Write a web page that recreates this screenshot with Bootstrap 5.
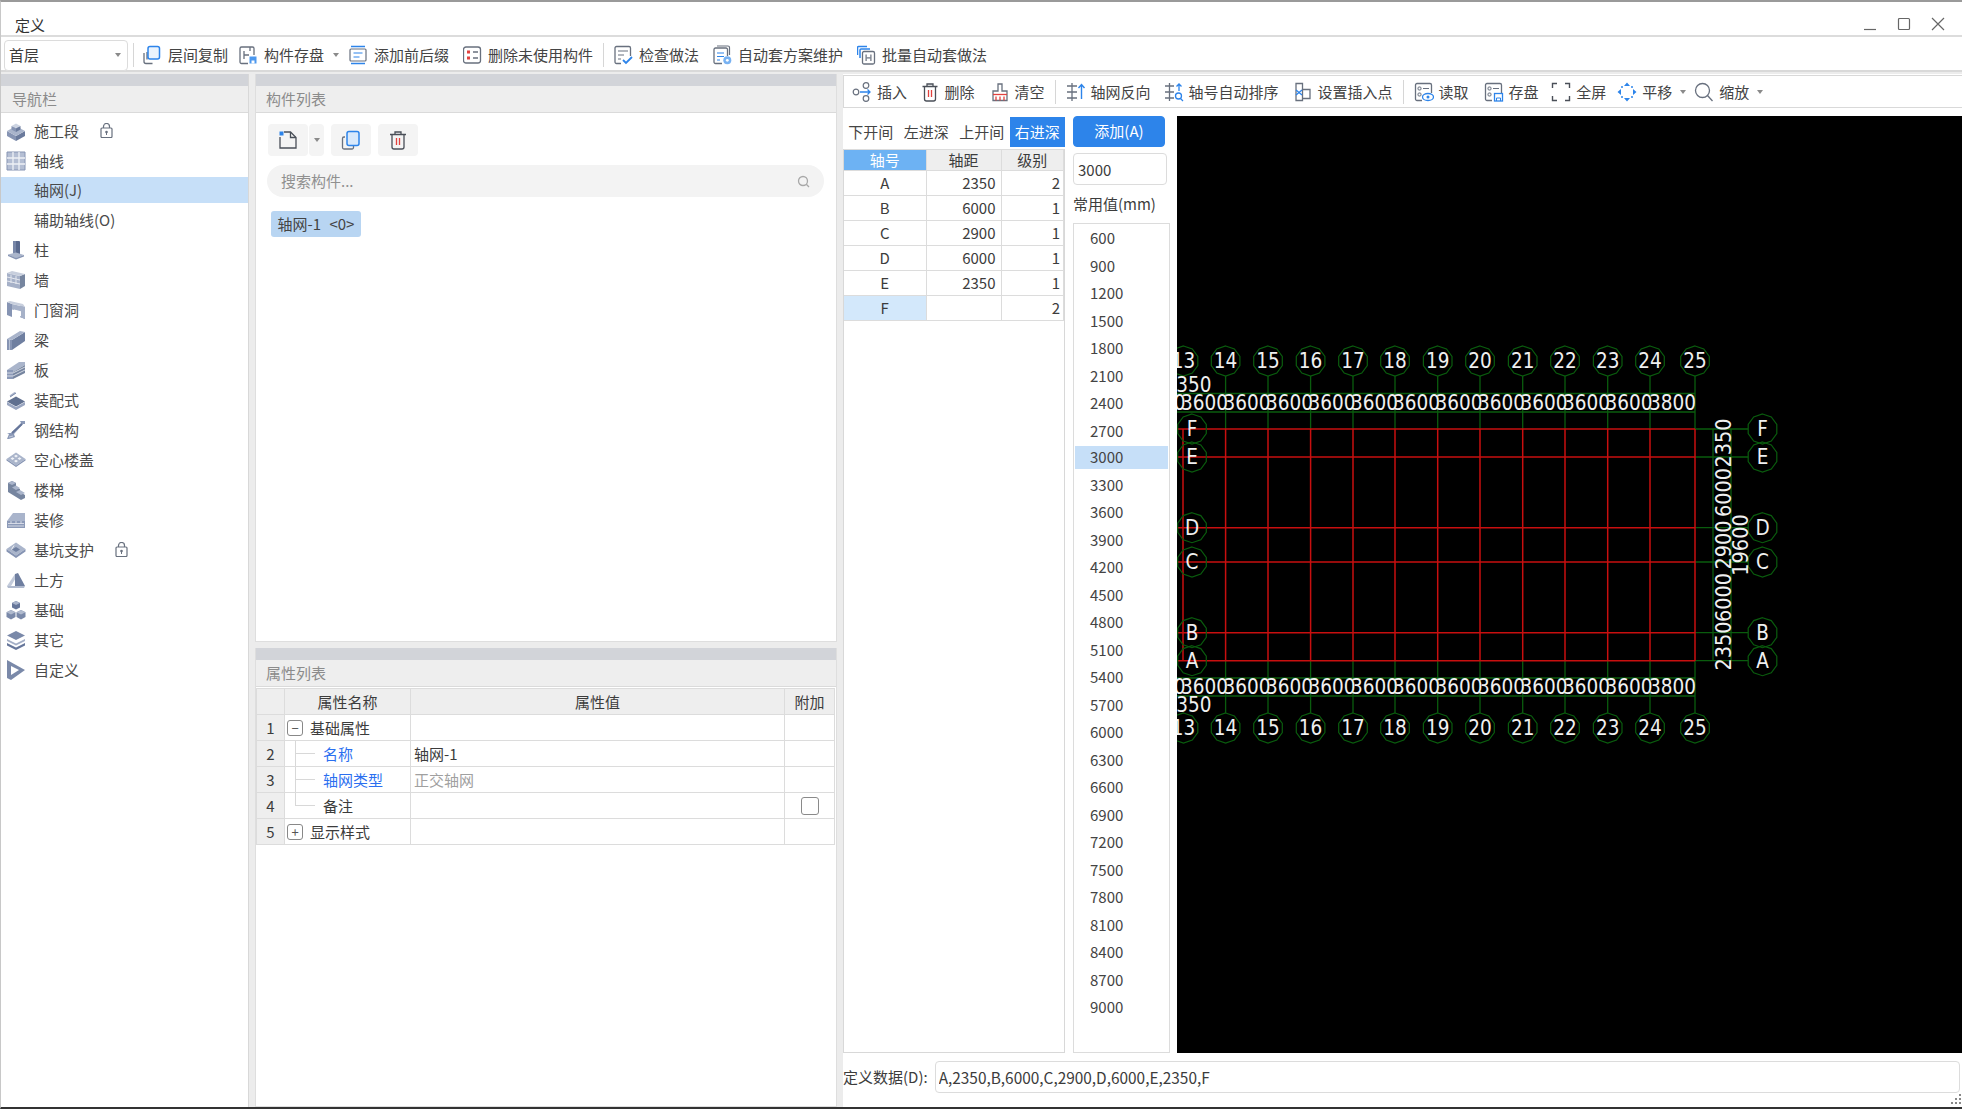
<!DOCTYPE html>
<html lang="zh-CN">
<head>
<meta charset="utf-8">
<title>定义</title>
<link href="https://cdn.jsdelivr.net/npm/bootstrap@5.3.0/dist/css/bootstrap.min.css" rel="stylesheet">
<style>
html,body{height:100%;margin:0;overflow:hidden;background:#fff}
body{font-family:"Noto Sans CJK SC","Liberation Sans",sans-serif;font-size:15px;color:#3c3c3c;line-height:1.2}
.ql-win{width:1962px;height:1109px;display:flex;flex-direction:column;border-top:2px solid #9a9a9a;border-bottom:2px solid #333;border-left:1px solid #c8c8c8;background:#fff}
.ql-title{height:35px;flex:none;display:flex;align-items:flex-end;justify-content:space-between;padding:0 17px 1px 14px;border-bottom:2px solid #dcdcdc;font-size:15px;color:#333}
.ql-title span{line-height:18px}
.ql-winbtns{display:flex;align-items:center;gap:20px;padding-bottom:3px}
.ql-winbtns svg{display:block}
.ql-bar1{height:35px;flex:none;display:flex;align-items:center;padding:3px 0 0 3px;border-bottom:2px solid #d9d9d9;background:#fff}
.ql-sel{width:124px;height:31px;border:1px solid #dcdcdc;border-radius:4px;display:flex;align-items:center;justify-content:space-between;padding:0 6px 0 4px;flex:none;background:#fff;font-size:15px}
.ql-caret{display:inline-block;width:0;height:0;border-left:3px solid transparent;border-right:3px solid transparent;border-top:4px solid #8a8a8a;flex:none}
.ql-sep{width:1px;height:24px;background:#d6d6d6;flex:none}
.ql-tool{display:flex;align-items:center;gap:5px;flex:none;white-space:nowrap;color:#444}
.ql-ic{width:20px;height:20px;flex:none;display:block}
.ql-main{flex:1;min-height:0;display:flex;background:#ececec;padding-top:2px}
.ql-col-nav{width:248px;flex:none;display:flex;flex-direction:column;background:#fff;border-right:1px solid #d8d8d8}
.ql-col-mid{width:582px;margin-left:6px;flex:none;display:flex;flex-direction:column;gap:6px}
.ql-col-right{flex:1;min-width:0;margin-left:6px;display:flex;flex-direction:column;background:#fff}
.ql-band{height:12px;flex:none;background:#d2d4d9}
.ql-phead{height:27px;flex:none;background:#eeeeee;border-bottom:1px solid #dadada;color:#8b8b8b;font-size:15px;display:flex;align-items:center;padding:0 10px}
.ql-col-nav .ql-phead{padding-left:11px}
.ql-nav.list-group{--bs-list-group-bg:transparent;padding-top:4.5px;border-radius:0}
.ql-nav .list-group-item{border:0;border-radius:0;height:26px;margin-bottom:4px;padding:0 0 0 5px;display:flex;align-items:center;gap:8px;font-size:15px;color:#4a4a4a;background:#fff}
.ql-nav .list-group-item.active{background:#c6dff8;color:#4a4a4a}
.ql-sub{padding-left:33px!important}
.ql-lock{width:13px;height:15px;margin-left:13px;flex:none}
.ql-panel{background:#fff;display:flex;flex-direction:column;border:1px solid #dedede;border-width:0 1px 1px 1px}
.ql-p-top{height:568px;flex:none}
.ql-p-bot{flex:1;min-height:0}
.ql-ptools{display:flex;gap:7px;padding:11px 0 0 12px;flex:none}
.ql-pbtn{height:32px;width:40px;background:#f4f4f4;border-radius:4px;display:flex;align-items:center;justify-content:center}
.ql-split{display:flex;gap:1px}
.ql-split .ql-pbtn:last-child{width:15px}
.ql-search{margin:9px 12px 0 11px;height:32px;display:flex;align-items:center;justify-content:space-between;background:#f3f3f3;border-radius:16px;padding:0 14px;color:#909090;font-size:15px;flex:none}
.ql-chip{margin:14px 0 0 15px;align-self:flex-start;width:90px;height:26px;background:#b8d5f2;border-radius:3px;display:flex;align-items:center;justify-content:center;font-size:15px;word-spacing:5px;color:#444;white-space:nowrap}
.ql-ptab.table{width:579px;table-layout:fixed;margin:1px 0 0 0;--bs-table-border-color:#dcdcdc;font-size:15px;color:#3c3c3c;border-collapse:collapse}
.ql-ptab th,.ql-ptab td{height:26px;padding:0;vertical-align:middle;font-weight:400;border:1px solid #dcdcdc}
.ql-ptab thead th{background:#eeeeee;text-align:center}
.ql-ptab .ql-num{background:#eeeeee;text-align:center}
.ql-c1{width:28px}.ql-c2{width:126px}.ql-c3{width:374px}
.ql-val{padding-left:3px!important}
.ql-name{display:flex;align-items:center;height:25px}
.ql-box{width:16px;height:16px;border:1px solid #888;border-radius:3px;display:flex;align-items:center;justify-content:center;margin:0 7px 0 2px;font-size:13px;line-height:1;color:#555;flex:none}
.ql-branch{width:38px;height:25px;flex:none;background:linear-gradient(#d8d8d8,#d8d8d8) 10px 0/1px 100% no-repeat,linear-gradient(#d8d8d8,#d8d8d8) 10px 50%/20px 1px no-repeat}
.ql-branch-end{background:linear-gradient(#d8d8d8,#d8d8d8) 10px 0/1px 50% no-repeat,linear-gradient(#d8d8d8,#d8d8d8) 10px 50%/20px 1px no-repeat}
.ql-blue{color:#2b6ff0}
.ql-grey{color:#a0a0a0}
.ql-ck.form-check-input{width:18px;height:18px;border:1px solid #8a8a8a;border-radius:3px;display:block;margin:auto}
.ql-bar2{height:33px;flex:none;display:flex;align-items:center;border:1px solid #d9d9d9;border-right:0;background:#fff;margin-top:1px;padding:1px 0 0 8px}
.ql-work{flex:1;min-height:0;display:flex;margin-top:8px}
.ql-axis{width:222px;flex:none;display:flex;flex-direction:column}
.ql-tabs.nav{flex:none;height:30px;margin:1px 0 2px 0;flex-wrap:nowrap}
.ql-tabs .nav-link{flex:1;padding:0;border-radius:0;height:30px;display:flex;align-items:center;justify-content:center;font-size:15px;color:#444;white-space:nowrap}
.ql-tabs .nav-link.active{background:#2d84ea;color:#fff}
.ql-axbox{flex:1;border:1px solid #d8d8d8;border-top:0;min-height:0}
.ql-axtab.table{width:100%;table-layout:fixed;margin:0;font-size:15px;color:#3c3c3c;border-collapse:collapse}
.ql-axtab th,.ql-axtab td{height:25px;padding:0 5px;font-weight:400;vertical-align:middle;border:1px solid #dcdcdc;border-left:0;border-right:1px solid #dcdcdc}
.ql-axtab td:nth-child(3){padding-right:3px}
.ql-axtab thead th{height:21px;background:#eeeeee;text-align:center}
.ql-axtab thead th.ql-hd{background:#6db2f3;color:#fff}
.ql-axtab td:first-child{text-align:center}
.ql-axtab td:nth-child(2),.ql-axtab td:nth-child(3){text-align:right}
.ql-axtab td.ql-cur{background:#d3e8fb}
.ql-ax1{width:82px}.ql-ax2{width:75px}
.ql-vals{width:97px;margin-left:8px;flex:none;display:flex;flex-direction:column}
.ql-add.btn{width:92px;height:31px;padding:0;background:#2d84ea;border-color:#2d84ea;border-radius:4px;color:#fff;font-size:15px}
.ql-inp.form-control{width:94px;height:32px;margin-top:6px;padding:0 4px;border:1px solid #dcdcdc;border-radius:4px;font-size:15px;color:#3c3c3c}
.ql-lab{height:37px;display:flex;align-items:center;flex:none;font-size:15px;white-space:nowrap;margin-bottom:1px}
.ql-list.list-group{flex:1;min-height:0;border:1px solid #dcdcdc;border-radius:0;padding:2.5px 1px 0 1px;--bs-list-group-bg:transparent}
.ql-list .list-group-item{border:0;border-radius:0;padding:0 0 0 15px;height:23px;margin-bottom:4.5px;display:flex;align-items:center;font-size:15px;color:#444;background:transparent}
.ql-list .list-group-item.active{background:#c6dff8;color:#444}
.ql-canvas{width:785px;height:937px;flex:none;margin-left:7px;background:#000;display:block}
.ql-canvas text{font-family:"DejaVu Sans",sans-serif;font-stretch:condensed;font-size:20.5px;fill:#f0f0f0;text-anchor:middle}
.ql-canvas text.ql-vtxt{font-size:21.5px}
.ql-bottom{height:54px;flex:none;display:flex;align-items:center;padding:0 2px 6px 0;gap:7px;font-size:15px}
.ql-def.form-control{flex:1;height:32px;border:1px solid #dcdcdc;border-radius:4px;padding:0 3px;font-size:15.4px;color:#3c3c3c}
.ql-grip{display:flex;justify-content:flex-end;height:0}
.ql-grip svg{margin-top:-14px;display:block}
.ql-m5{margin-left:5px;margin-right:9px}
.ql-t1{margin-right:11px}.ql-t2{margin-right:9px}.ql-car1{margin-right:10px}.ql-t3{margin-right:14px}.ql-t4{margin-right:10px}.ql-m6{margin-right:10px}.ql-t5{margin-right:14px}
.ql-r0{margin-right:12.5px}.ql-r1{margin-right:15px}.ql-r2{margin-right:10px}.ql-r3{margin-right:10px}.ql-r4{margin-right:13px}.ql-r4b{margin-right:14px}.ql-r5{margin-right:10px}.ql-r6{margin-right:10px}.ql-r7{margin-right:15px}.ql-r7b{margin-right:12.5px}.ql-r8{margin-right:11px}.ql-r9{margin-right:8px}.ql-car2{margin-right:8px}.ql-car3{margin-left:8px}
.ql-nogrow{flex:none}
</style>
</head>
<body>
<div class="ql-win">
  <div class="ql-title">
    <span>定义</span>
    <div class="ql-winbtns">
      <svg width="14" height="14" viewBox="0 0 14 14"><path d="M1 12.500h12" stroke="#666" stroke-width="1.200"/></svg>
      <svg width="14" height="14" viewBox="0 0 14 14"><rect x="1.500" y="1.500" width="11" height="11" rx="1" fill="none" stroke="#666" stroke-width="1.200"/></svg>
      <svg width="14" height="14" viewBox="0 0 14 14"><path d="M1 1l12 12M13 1L1 13" stroke="#666" stroke-width="1.200"/></svg>
    </div>
  </div>
  <div class="ql-bar1">
    <div class="ql-sel"><span>首层</span><i class="ql-caret"></i></div>
    <div class="ql-sep ql-m5"></div>
    <div class="ql-tool ql-t1"><svg class="ql-ic" viewBox="2 0 20 20" fill="none"><path d="M3 8v8.500a2 2 0 0 0 2 2h6.500M6 7v7.500" stroke="#68707e" stroke-width="1.300"/><rect x="7" y="1.500" width="11.500" height="12.500" rx="2" stroke="#2d84ea" stroke-width="1.500" fill="#eaf3fd"/></svg>层间复制</div>
    <div class="ql-tool ql-t2"><svg class="ql-ic" viewBox="1 0 20 20" fill="none"><path d="M10 18.500H3.500a1.500 1.500 0 0 1-1.500-1.500V3.500A1.500 1.500 0 0 1 3.500 2h11A1.500 1.500 0 0 1 16 3.500V10M6 6v8M6 10h5M12 2v4" stroke="#68707e" stroke-width="1.300"/><path d="M11.500 11.500h7v7h-7z" fill="#4c98ee"/><path d="M13.500 15.500h3v3h-3z" fill="#fff"/></svg>构件存盘</div>
    <i class="ql-caret ql-car1"></i>
    <div class="ql-tool ql-t3"><svg class="ql-ic" viewBox="1 0 20 20" fill="none"><path d="M3 1.500h14M3 18.500h14" stroke="#2d84ea" stroke-width="1.600"/><rect x="2" y="4" width="16" height="12" rx="1" stroke="#68707e" stroke-width="1.200"/><path d="M5.500 8h9M5.500 12h6" stroke="#2d84ea" stroke-width="1.200"/></svg>添加前后缀</div>
    <div class="ql-tool ql-t4"><svg class="ql-ic" viewBox="1 0 20 20" fill="none"><rect x="1.500" y="2" width="17" height="16" rx="2.500" stroke="#68707e" stroke-width="1.300"/><path d="M5 5.500h3v3H5zM5 11.500h3v3H5z" fill="#e2413e"/><path d="M11 7h5M11 13h5" stroke="#68707e" stroke-width="1.300"/></svg>删除未使用构件</div>
    <div class="ql-sep ql-m6"></div>
    <div class="ql-tool ql-t5"><svg class="ql-ic" viewBox="1 0 20 20" fill="none"><path d="M8 18.500H3.500A1.500 1.500 0 0 1 2 17V3a1.500 1.500 0 0 1 1.500-1.500H16A1.500 1.500 0 0 1 17.500 3v8" stroke="#68707e" stroke-width="1.300"/><path d="M5 6h10M5 10h6M5 14h3" stroke="#68707e" stroke-width="1.200"/><path d="M10 15l3 3 6-6" stroke="#2d84ea" stroke-width="1.800"/></svg>检查做法</div>
    <div class="ql-tool ql-t5"><svg class="ql-ic" viewBox="1 0 20 20" fill="none"><path d="M5 1h11a1.500 1.500 0 0 1 1.500 1.500V10" stroke="#68707e" stroke-width="1.200"/><path d="M10 18.500H3.500A1.500 1.500 0 0 1 2 17V4.500A1.500 1.500 0 0 1 3.500 3H14a1.500 1.500 0 0 1 1.500 1.500V11" stroke="#68707e" stroke-width="1.300"/><path d="M5 8h7M5 11.500h7M5 15h3" stroke="#2d84ea" stroke-width="1.200"/><circle cx="15.300" cy="15.300" r="4" fill="#78b2f2"/><circle cx="15.300" cy="15.300" r="1.400" fill="#fff"/></svg>自动套方案维护</div>
    <div class="ql-tool ql-t5"><svg class="ql-ic" viewBox="1 0 20 20" fill="none"><path d="M1.500 10V2.500a1 1 0 0 1 1-1H11M4 13V5a1 1 0 0 1 1-1h9" stroke="#2d84ea" stroke-width="1.500"/><rect x="6.500" y="6.500" width="12" height="12.500" rx="1.500" stroke="#68707e" stroke-width="1.300"/><rect x="9.500" y="9.500" width="1.200" height="6.500" fill="#68707e"/><rect x="14.300" y="9.500" width="1.200" height="6.500" fill="#68707e"/><rect x="10.500" y="12.300" width="4" height="1.200" fill="#68707e"/></svg>批量自动套做法</div>
  </div>
  <div class="ql-main">
    <div class="ql-col-nav">
      <div class="ql-band"></div>
      <div class="ql-phead">导航栏</div>
      <div class="list-group list-group-flush ql-nav">
        <div class="list-group-item"><svg class="ql-ic" viewBox="0 0 20 20"><path d="M1 10l9 5v5L1 15z" fill="#8694b3"/><path d="M19 10l-9 5v5l9-5z" fill="#6a7a9c"/><path d="M10 5l9 5-9 5-9-5z" fill="#a9b4cb"/><path d="M5.500 5L10 2.500 14.500 5 10 7.500z" fill="#cdd4e2"/><path d="M5.500 5v3.500L10 11V7.500z" fill="#8694b3"/><path d="M14.500 5v3.500L10 11V7.500z" fill="#6a7a9c"/></svg>施工段<svg class="ql-lock" viewBox="0 0 13 15" fill="none"><path d="M3.500 5V3.500a3 3 0 0 1 6 0V5" stroke="#68707e" stroke-width="1.200"/><rect x="1" y="5" width="11" height="9.500" rx="1" stroke="#68707e" stroke-width="1.200"/><circle cx="6.500" cy="9" r="1.300" fill="#68707e"/><path d="M6.500 9v3" stroke="#68707e"/></svg></div>
        <div class="list-group-item"><svg class="ql-ic" viewBox="0 0 20 20"><rect x="1" y="1" width="18" height="18" fill="#b4bed3"/><path d="M1 1h18v18H1z" fill="none" stroke="#8694b3"/><path d="M7 1v18M13 1v18M1 7h18M1 13h18" stroke="#eef1f6" stroke-width="1.300"/></svg>轴线</div>
        <div class="list-group-item active ql-sub">轴网(J)</div>
        <div class="list-group-item ql-sub">辅助轴线(O)</div>
        <div class="list-group-item"><svg class="ql-ic" viewBox="0 0 20 20"><path d="M7 1h3v14H7z" fill="#7887a8"/><path d="M10 1h3l1 .5V14l-4 1z" fill="#5a6a8e"/><path d="M2 14.500l8-2 8 2.500-8 3.500z" fill="#aab5cb"/><path d="M2 14.500V16l8 3.500V18zM18 15v1.500l-8 3V18z" fill="#8694b3"/></svg>柱</div>
        <div class="list-group-item"><svg class="ql-ic" viewBox="0 0 20 20"><path d="M1 3l13 3v13L1 16z" fill="#a6b1c8"/><path d="M14 6l5-2v12l-5 3z" fill="#76859f"/><path d="M1 3l5-2 13 3-5 2z" fill="#c8cfdd"/><path d="M1 7l13 3M1 11l13 3M5 4.500v4M10 5.500v4M5 13v-4M10 14v-4" stroke="#f2f4f8" stroke-width=".8"/></svg>墙</div>
        <div class="list-group-item"><svg class="ql-ic" viewBox="0 0 20 20"><path d="M1 2l5 2v13l-5-2zM14 5l5 2v12l-5-2z" fill="#8694b3"/><path d="M6 4l13 3v12l-5-2V11.500l-8-2z" fill="#a6b1c8"/><path d="M1 2l3-1 13 3 2 3L6 4z" fill="#c8cfdd"/><path d="M8 9.500l7 1.700v5l-7-1.700z" fill="#fff"/></svg>门窗洞</div>
        <div class="list-group-item"><svg class="ql-ic" viewBox="0 0 20 20"><path d="M1 9l5 1v10H1z" fill="#8694b3"/><path d="M6 10L19 2v9L6 20z" fill="#6f7fa0"/><path d="M1 9L14 1l5 1L6 10z" fill="#a9b4cb"/><path d="M3.500 10v10" stroke="#c3cbdb" stroke-width=".8"/></svg>梁</div>
        <div class="list-group-item"><svg class="ql-ic" viewBox="0 0 20 20"><path d="M1 10L13 2h6v3L7 12z" fill="#aab5cb"/><path d="M1 10h6v9H1z" fill="#8c9ab8"/><path d="M7 12l12-7v8L7 19z" fill="#76859f"/><path d="M1 13h6l12-6M1 16h6l12-6" stroke="#e8ebf1" stroke-width=".8" fill="none"/></svg>板</div>
        <div class="list-group-item"><svg class="ql-ic" viewBox="0 0 20 20"><path d="M1 12l9 5 9-5v3l-9 5-9-5z" fill="#9aa6c0"/><path d="M1 11.500L10 6.500l9 5-9 5z" fill="#60708f"/><path d="M3.500 5.500l5-3.500 1.500 1-5 3.500z" fill="#a9b4cb"/><path d="M4 7l6-4" stroke="#7a89a9"/></svg>装配式</div>
        <div class="list-group-item"><svg class="ql-ic" viewBox="0 0 20 20"><path d="M1 13h4L15 3l-1-2h5v3h-2L8 14l1 3-6 2H1l2-5z" fill="#8c9ab8"/><path d="M6 13L16 4" stroke="#66769a" stroke-width="1.800"/><path d="M3 17l4-1" stroke="#c3cbdb"/></svg>钢结构</div>
        <div class="list-group-item"><svg class="ql-ic" viewBox="0 0 20 20"><path d="M10 2.500l9.500 6.500L10 15.500.5 9z" fill="#aab5cb"/><path d="M.5 9v1.500L10 17l9.500-6.500V9L10 15.500z" fill="#8694b3"/><path d="M10 4.700l2 1.400-2 1.400-2-1.400zM6.500 7.200l2 1.400-2 1.400-2-1.400zM13.500 7.200l2 1.400-2 1.400-2-1.400zM10 9.700l2 1.400-2 1.400-2-1.400z" fill="#f0f2f7"/></svg>空心楼盖</div>
        <div class="list-group-item"><svg class="ql-ic" viewBox="0 0 20 20"><path d="M2 3l4-2 4 2v4l4 2v3l5 3v3l-4 2L2 12z" fill="#76859f"/><path d="M2 3l4-2 4 2-4 2zM6 7.500l4-2 4 2.500-4 2zM10 12l4-2 5 3-4 2z" fill="#aab5cb"/></svg>楼梯</div>
        <div class="list-group-item"><svg class="ql-ic" viewBox="0 0 20 20"><path d="M1 11L7 3h12v8z" fill="#a9b4cb"/><path d="M1 11h18v7H1z" fill="#8c9ab8"/><path d="M2 13.500h16M2 16h16M5 11v2.500M10 11v2.500M15 11v2.500" stroke="#e8ebf1" stroke-width=".8"/></svg>装修</div>
        <div class="list-group-item"><svg class="ql-ic" viewBox="0 0 20 20"><path d="M10 2.500l9.500 6.500L10 15.500.5 9z" fill="#aab5cb"/><path d="M.5 9v2.500L10 18l9.500-6.500V9L10 15.500z" fill="#8694b3"/><path d="M10 7l4 2.500-4 2.500-4-2.500z" fill="#6f7fa0"/><path d="M8 5.500l-2.500 4" stroke="#eef1f6"/></svg>基坑支护<svg class="ql-lock" viewBox="0 0 13 15" fill="none"><path d="M3.500 5V3.500a3 3 0 0 1 6 0V5" stroke="#68707e" stroke-width="1.200"/><rect x="1" y="5" width="11" height="9.500" rx="1" stroke="#68707e" stroke-width="1.200"/><circle cx="6.500" cy="9" r="1.300" fill="#68707e"/><path d="M6.500 9v3" stroke="#68707e"/></svg></div>
        <div class="list-group-item"><svg class="ql-ic" viewBox="0 0 20 20"><path d="M1 16L9 4l2 2-6 10z" fill="#c3cbdb"/><path d="M9 4l3-1 7 13H9z" fill="#6f7fa0"/><path d="M1 16h18l-1 2H2z" fill="#b0bace"/></svg>土方</div>
        <div class="list-group-item"><svg class="ql-ic" viewBox="0 0 20 20"><path d="M10 1l4 2v4.500L10 9.500 6 7.500V3z" fill="#66769a"/><path d="M6 3l4-2 4 2-4 2z" fill="#a9b4cb"/><path d="M5 10l4.500 2.300V17L5 19.500.5 17v-4.700z" fill="#7a89a9"/><path d="M.5 12.300L5 10l4.500 2.300L5 14.500z" fill="#b0bace"/><path d="M15 10l4.500 2.300V17L15 19.500 10.500 17v-4.700z" fill="#7a89a9"/><path d="M10.500 12.300L15 10l4.500 2.300L15 14.500z" fill="#b0bace"/></svg>基础</div>
        <div class="list-group-item"><svg class="ql-ic" viewBox="0 0 20 20"><path d="M10 1l9 4.500-9 4.500-9-4.500z" fill="#7a89a9"/><path d="M1 9l9 4.500L19 9v2l-9 4.500L1 11z" fill="#a4afc6"/><path d="M1 13l9 4.500 9-4.500v2.500L10 20l-9-4.500z" fill="#66769a"/></svg>其它</div>
        <div class="list-group-item"><svg class="ql-ic" viewBox="0 0 20 20"><path d="M1 0l18 10L5 20l-4-2z" fill="#7a89a9"/><path d="M5 6l8 4-8 5z" fill="#fff"/></svg>自定义</div>
      </div>
    </div>
    <div class="ql-col-mid">
      <div class="ql-panel ql-p-top">
        <div class="ql-band"></div>
        <div class="ql-phead">构件列表</div>
        <div class="ql-ptools">
          <div class="ql-split">
            <div class="ql-pbtn"><svg class="ql-ic" viewBox="0 0 20 20" fill="none"><path d="M6 2h6.500L18 7.500V18H2V7" stroke="#4a4f58" stroke-width="1.300"/><path d="M12.500 2v5.500H18" stroke="#4a4f58" stroke-width="1.300"/><path d="M1.500 1.500h4v4h-4z" fill="#2d84ea"/></svg></div>
            <div class="ql-pbtn"><i class="ql-caret"></i></div>
          </div>
          <div class="ql-pbtn"><svg class="ql-ic" viewBox="0 0 20 20" fill="none"><path d="M4 7H3a1.500 1.500 0 0 0-1.500 1.500v9A1.500 1.500 0 0 0 3 19h8a1.500 1.500 0 0 0 1.500-1.500V16" stroke="#68707e" stroke-width="1.300"/><rect x="6" y="1.500" width="12" height="14" rx="2" stroke="#2d84ea" stroke-width="1.500" fill="#d9e9fb"/></svg></div>
          <div class="ql-pbtn"><svg class="ql-ic" viewBox="0 0 20 20" fill="none"><path d="M2 4.500h16M7 4.500V2h6v2.500M4 4.500V17a2 2 0 0 0 2 2h8a2 2 0 0 0 2-2V4.500" stroke="#4a4f58" stroke-width="1.300"/><path d="M8.500 8v7M11.500 8v7" stroke="#e2413e" stroke-width="1.300"/></svg></div>
        </div>
        <div class="ql-search"><span>搜索构件...</span><svg width="13" height="13" viewBox="0 0 13 13" fill="none"><circle cx="6" cy="6" r="4.500" stroke="#a8a8a8" stroke-width="1.300"/><path d="M9.300 9.300L12 12" stroke="#a8a8a8" stroke-width="1.300"/></svg></div>
        <div class="ql-chip">轴网-1 &lt;0&gt;</div>
      </div>
      <div class="ql-panel ql-p-bot">
        <div class="ql-band"></div>
        <div class="ql-phead">属性列表</div>
        <table class="table ql-ptab">
          <colgroup><col class="ql-c1"><col class="ql-c2"><col class="ql-c3"><col></colgroup>
          <thead><tr><th></th><th>属性名称</th><th>属性值</th><th>附加</th></tr></thead>
          <tbody>
            <tr><td class="ql-num">1</td><td><div class="ql-name"><span class="ql-box">−</span>基础属性</div></td><td></td><td></td></tr>
            <tr><td class="ql-num">2</td><td><div class="ql-name"><span class="ql-branch"></span><span class="ql-blue">名称</span></div></td><td class="ql-val">轴网-1</td><td></td></tr>
            <tr><td class="ql-num">3</td><td><div class="ql-name"><span class="ql-branch"></span><span class="ql-blue">轴网类型</span></div></td><td class="ql-val ql-grey">正交轴网</td><td></td></tr>
            <tr><td class="ql-num">4</td><td><div class="ql-name"><span class="ql-branch ql-branch-end"></span><span>备注</span></div></td><td></td><td><input class="form-check-input ql-ck" type="checkbox"></td></tr>
            <tr><td class="ql-num">5</td><td><div class="ql-name"><span class="ql-box">+</span>显示样式</div></td><td></td><td></td></tr>
          </tbody>
        </table>
      </div>
    </div>
    <div class="ql-col-right">
      <div class="ql-bar2">
        <div class="ql-tool ql-r0"><svg class="ql-ic" viewBox="0 0 20 20" fill="none"><circle cx="4" cy="10" r="2.800" stroke="#68707e" stroke-width="1.200"/><circle cx="14" cy="3.500" r="2.800" stroke="#68707e" stroke-width="1.200"/><circle cx="14" cy="16.500" r="2.800" stroke="#68707e" stroke-width="1.200"/><path d="M8 10h10M15.500 7.500L18 10l-2.500 2.500" stroke="#2d84ea" stroke-width="1.300"/></svg>插入</div>
        <div class="ql-tool ql-r1"><svg class="ql-ic" viewBox="0 0 20 20" fill="none"><path d="M2.500 4.500h15M7 4.500V2h6v2.500M4.500 4.500V17a2 2 0 0 0 2 2h7a2 2 0 0 0 2-2V4.500" stroke="#4a4f58" stroke-width="1.300"/><path d="M8.500 8v7M11.500 8v7" stroke="#e2413e" stroke-width="1.300"/></svg>删除</div>
        <div class="ql-tool ql-r2"><svg class="ql-ic" viewBox="0 0 20 20" fill="none"><path d="M8 2h4v7h5v9.500H3V9h5z" stroke="#68707e" stroke-width="1.300"/><path d="M3 12.500h14" stroke="#e2413e" stroke-width="1.300"/><path d="M6 14.500v4M10 14.500v4M14 14.500v4" stroke="#e2413e" stroke-width="1.300"/></svg>清空</div>
        <div class="ql-sep ql-r3"></div>
        <div class="ql-tool ql-r4"><svg class="ql-ic" viewBox="0 0 20 20" fill="none"><path d="M1 4h10M1 10h10M1 16h10M6 1v18" stroke="#68707e" stroke-width="1.300"/><path d="M15.500 17V3M12.500 6l3-3.500 3 3.500" stroke="#2d84ea" stroke-width="1.400"/></svg>轴网反向</div>
        <div class="ql-tool ql-r4b"><svg class="ql-ic" viewBox="0 0 20 20" fill="none"><path d="M1 4h9M1 10h9M1 16h9M5.500 1v18" stroke="#68707e" stroke-width="1.300"/><path d="M15 9V2M12.500 4.500L15 2l2.500 2.500" stroke="#2d84ea" stroke-width="1.300"/><circle cx="14.500" cy="14" r="3" stroke="#2d84ea" stroke-width="1.300"/><path d="M16.500 16.500l2.500 2.500" stroke="#2d84ea" stroke-width="1.300"/></svg>轴号自动排序</div>
        <div class="ql-tool ql-r5"><svg class="ql-ic" viewBox="0 0 20 20" fill="none"><path d="M3 1.500h6.500v17H3zM9.500 7.500H17v9H9.500" stroke="#68707e" stroke-width="1.300"/><path d="M3 8l6 5M9 8l-6 5" stroke="#2d84ea" stroke-width="1.300"/></svg>设置插入点</div>
        <div class="ql-sep ql-r6"></div>
        <div class="ql-tool ql-r7"><svg class="ql-ic" viewBox="0 0 20 20" fill="none"><path d="M8 18.500H3A1.500 1.500 0 0 1 1.500 17V3A1.500 1.500 0 0 1 3 1.500h13A1.500 1.500 0 0 1 17.500 3v8" stroke="#68707e" stroke-width="1.300"/><rect x="4" y="5" width="3" height="3" rx="1" stroke="#68707e"/><rect x="4" y="11" width="3" height="3" rx="1" stroke="#68707e"/><path d="M9 6.500h6" stroke="#68707e"/><ellipse cx="14" cy="15" rx="5.500" ry="3.500" fill="#fff" stroke="#2d84ea" stroke-width="1.300"/><circle cx="14" cy="15" r="1.500" fill="#2d84ea"/></svg>读取</div>
        <div class="ql-tool ql-r7b"><svg class="ql-ic" viewBox="0 0 20 20" fill="none"><path d="M8 18.500H3A1.500 1.500 0 0 1 1.500 17V3A1.500 1.500 0 0 1 3 1.500h13A1.500 1.500 0 0 1 17.500 3v8" stroke="#68707e" stroke-width="1.300"/><rect x="4" y="5" width="3" height="3" rx="1" stroke="#68707e"/><rect x="4" y="11" width="3" height="3" rx="1" stroke="#68707e"/><path d="M9 6.500h6" stroke="#68707e"/><rect x="10.500" y="11.500" width="8" height="7.500" stroke="#2d84ea" stroke-width="1.300" fill="#fff"/><path d="M12.500 19v-3h4v3" stroke="#2d84ea"/></svg>存盘</div>
        <div class="ql-tool ql-r8"><svg class="ql-ic" viewBox="0 0 20 20" fill="none"><path d="M6 1.500H1.500V6M14 1.500h4.500V6M6 18.500H1.500V14M14 18.500h4.500V14" stroke="#4a4f58" stroke-width="1.400"/></svg>全屏</div>
        <div class="ql-tool ql-r9"><svg class="ql-ic" viewBox="0 0 20 20" fill="none"><path d="M10 .5l3 3.500H7zM10 19.500l3-3.500H7zM.5 10L4 7v6zM19.500 10L16 7v6z" fill="#2d84ea"/><circle cx="5" cy="5" r="1" fill="#2d84ea"/><circle cx="15" cy="5" r="1" fill="#2d84ea"/><circle cx="5" cy="15" r="1" fill="#2d84ea"/><circle cx="15" cy="15" r="1" fill="#2d84ea"/></svg>平移</div>
        <i class="ql-caret ql-car2"></i>
        <div class="ql-tool"><svg class="ql-ic" viewBox="0 0 20 20" fill="none"><circle cx="8.500" cy="8.500" r="7" stroke="#68707e" stroke-width="1.300"/><path d="M13.500 13.500l5 5.500" stroke="#68707e" stroke-width="1.300"/></svg>缩放</div>
        <i class="ql-caret ql-car3"></i>
      </div>
      <div class="ql-work">
        <div class="ql-axis">
          <div class="nav nav-pills ql-tabs">
            <span class="nav-link">下开间</span><span class="nav-link">左进深</span><span class="nav-link">上开间</span><span class="nav-link active">右进深</span>
          </div>
          <div class="ql-axbox">
            <table class="table ql-axtab">
              <colgroup><col class="ql-ax1"><col class="ql-ax2"><col></colgroup>
              <thead><tr><th class="ql-hd">轴号</th><th>轴距</th><th>级别</th></tr></thead>
              <tbody>
                <tr><td>A</td><td>2350</td><td>2</td></tr>
                <tr><td>B</td><td>6000</td><td>1</td></tr>
                <tr><td>C</td><td>2900</td><td>1</td></tr>
                <tr><td>D</td><td>6000</td><td>1</td></tr>
                <tr><td>E</td><td>2350</td><td>1</td></tr>
                <tr><td class="ql-cur">F</td><td></td><td>2</td></tr>
              </tbody>
            </table>
          </div>
        </div>
        <div class="ql-vals">
          <button class="btn btn-primary ql-add" type="button">添加(A)</button>
          <input class="form-control ql-inp" type="text" value="3000">
          <div class="ql-lab">常用值(mm)</div>
          <div class="list-group ql-list">
            <div class="list-group-item">600</div><div class="list-group-item">900</div><div class="list-group-item">1200</div><div class="list-group-item">1500</div><div class="list-group-item">1800</div><div class="list-group-item">2100</div><div class="list-group-item">2400</div><div class="list-group-item">2700</div><div class="list-group-item active">3000</div><div class="list-group-item">3300</div><div class="list-group-item">3600</div><div class="list-group-item">3900</div><div class="list-group-item">4200</div><div class="list-group-item">4500</div><div class="list-group-item">4800</div><div class="list-group-item">5100</div><div class="list-group-item">5400</div><div class="list-group-item">5700</div><div class="list-group-item">6000</div><div class="list-group-item">6300</div><div class="list-group-item">6600</div><div class="list-group-item">6900</div><div class="list-group-item">7200</div><div class="list-group-item">7500</div><div class="list-group-item">7800</div><div class="list-group-item">8100</div><div class="list-group-item">8400</div><div class="list-group-item">8700</div><div class="list-group-item">9000</div>
          </div>
        </div>
        <svg class="ql-canvas" viewBox="1177 116 785 937" overflow="hidden">
          <defs><polygon id="ql-oct" points="0,-15 8.800,-12.100 14.300,-4.600 14.300,4.600 8.800,12.100 0,15 -8.800,12.100 -14.300,4.600 -14.300,-4.600 -8.800,-12.100" fill="none" stroke="#0a5c0e" stroke-width="1.200"/></defs>
          <g stroke="#0a5c0e" stroke-width="1.300" fill="none">
            <path d="M1225.600 376V429M1268 376V429M1310.600 376V429M1353 376V429M1395 376V429M1437.700 376V429M1480 376V429M1522.700 376V429M1565 376V429M1607.700 376V429M1650 376V429M1695 376V429"/>
            <path d="M1225.600 661V713M1268 661V713M1310.600 661V713M1353 661V713M1395 661V713M1437.700 661V713M1480 661V713M1522.700 661V713M1565 661V713M1607.700 661V713M1650 661V713M1695 661V713"/>
            <path d="M1177 393.500H1695M1177 412H1695M1177 678H1695M1177 696H1695"/>
            <path d="M1695 429H1748M1695 457H1748M1695 527.700H1748M1695 562H1748M1695 632.700H1748M1695 660.700H1748M1713 429V661M1731 429V661"/>
          </g>
          <g stroke="#c80f0f" stroke-width="1.500" fill="none">
            <path d="M1177 429H1695M1177 457H1695M1177 527.700H1695M1177 562H1695M1177 632.700H1695M1177 660.700H1695"/>
            <path d="M1183 429V661M1225.600 429V661M1268 429V661M1310.600 429V661M1353 429V661M1395 429V661M1437.700 429V661M1480 429V661M1522.700 429V661M1565 429V661M1607.700 429V661M1650 429V661M1695 429V661"/>
          </g>
          <use href="#ql-oct" x="1183.500" y="361"/><use href="#ql-oct" x="1225.600" y="361"/><use href="#ql-oct" x="1268" y="361"/><use href="#ql-oct" x="1310.600" y="361"/><use href="#ql-oct" x="1353" y="361"/><use href="#ql-oct" x="1395" y="361"/><use href="#ql-oct" x="1437.700" y="361"/><use href="#ql-oct" x="1480" y="361"/><use href="#ql-oct" x="1522.700" y="361"/><use href="#ql-oct" x="1565" y="361"/><use href="#ql-oct" x="1607.700" y="361"/><use href="#ql-oct" x="1650" y="361"/><use href="#ql-oct" x="1695" y="361"/>
          <use href="#ql-oct" x="1183.500" y="728"/><use href="#ql-oct" x="1225.600" y="728"/><use href="#ql-oct" x="1268" y="728"/><use href="#ql-oct" x="1310.600" y="728"/><use href="#ql-oct" x="1353" y="728"/><use href="#ql-oct" x="1395" y="728"/><use href="#ql-oct" x="1437.700" y="728"/><use href="#ql-oct" x="1480" y="728"/><use href="#ql-oct" x="1522.700" y="728"/><use href="#ql-oct" x="1565" y="728"/><use href="#ql-oct" x="1607.700" y="728"/><use href="#ql-oct" x="1650" y="728"/><use href="#ql-oct" x="1695" y="728"/>
          <use href="#ql-oct" x="1192" y="429"/><use href="#ql-oct" x="1192" y="457"/><use href="#ql-oct" x="1192" y="527.700"/><use href="#ql-oct" x="1192" y="562"/><use href="#ql-oct" x="1192" y="632.700"/><use href="#ql-oct" x="1192" y="660.700"/>
          <use href="#ql-oct" x="1762.500" y="429"/><use href="#ql-oct" x="1762.500" y="457"/><use href="#ql-oct" x="1762.500" y="527.700"/><use href="#ql-oct" x="1762.500" y="562"/><use href="#ql-oct" x="1762.500" y="632.700"/><use href="#ql-oct" x="1762.500" y="660.700"/>
          <g>
            <text x="1183.500" y="368">13</text><text x="1225.600" y="368">14</text><text x="1268" y="368">15</text><text x="1310.600" y="368">16</text><text x="1353" y="368">17</text><text x="1395" y="368">18</text><text x="1437.700" y="368">19</text><text x="1480" y="368">20</text><text x="1522.700" y="368">21</text><text x="1565" y="368">22</text><text x="1607.700" y="368">23</text><text x="1650" y="368">24</text><text x="1695" y="368">25</text>
            <text x="1183.500" y="735">13</text><text x="1225.600" y="735">14</text><text x="1268" y="735">15</text><text x="1310.600" y="735">16</text><text x="1353" y="735">17</text><text x="1395" y="735">18</text><text x="1437.700" y="735">19</text><text x="1480" y="735">20</text><text x="1522.700" y="735">21</text><text x="1565" y="735">22</text><text x="1607.700" y="735">23</text><text x="1650" y="735">24</text><text x="1695" y="735">25</text>
            <text x="1188" y="392">2350</text><text x="1188" y="712">2350</text>
            <text x="1162" y="410">3600</text><text x="1204.500" y="410">3600</text><text x="1247" y="410">3600</text><text x="1289.500" y="410">3600</text><text x="1332" y="410">3600</text><text x="1374.500" y="410">3600</text><text x="1416.500" y="410">3600</text><text x="1459" y="410">3600</text><text x="1501.500" y="410">3600</text><text x="1544" y="410">3600</text><text x="1586.500" y="410">3600</text><text x="1629" y="410">3600</text><text x="1672.500" y="410">3800</text>
            <text x="1162" y="694">3600</text><text x="1204.500" y="694">3600</text><text x="1247" y="694">3600</text><text x="1289.500" y="694">3600</text><text x="1332" y="694">3600</text><text x="1374.500" y="694">3600</text><text x="1416.500" y="694">3600</text><text x="1459" y="694">3600</text><text x="1501.500" y="694">3600</text><text x="1544" y="694">3600</text><text x="1586.500" y="694">3600</text><text x="1629" y="694">3600</text><text x="1672.500" y="694">3800</text>
            <text x="1192" y="436">F</text><text x="1192" y="464">E</text><text x="1192" y="534.700">D</text><text x="1192" y="569">C</text><text x="1192" y="639.700">B</text><text x="1192" y="667.700">A</text>
            <text x="1762.500" y="436">F</text><text x="1762.500" y="464">E</text><text x="1762.500" y="534.700">D</text><text x="1762.500" y="569">C</text><text x="1762.500" y="639.700">B</text><text x="1762.500" y="667.700">A</text>
            <text class="ql-vtxt" transform="translate(1730.500 443) rotate(-90)">2350</text><text class="ql-vtxt" transform="translate(1730.500 492.500) rotate(-90)">6000</text><text class="ql-vtxt" transform="translate(1730.500 545) rotate(-90)">2900</text><text class="ql-vtxt" transform="translate(1730.500 597.500) rotate(-90)">6000</text><text class="ql-vtxt" transform="translate(1730.500 646) rotate(-90)">2350</text>
            <text class="ql-vtxt" transform="translate(1747.500 545) rotate(-90)">19600</text>
          </g>
        </svg>
      </div>
      <div class="ql-bottom"><span class="ql-nogrow">定义数据(D):</span><input class="form-control ql-def" type="text" value="A,2350,B,6000,C,2900,D,6000,E,2350,F"></div>
      <div class="ql-grip"><svg width="12" height="12" viewBox="0 0 12 12"><path d="M9 1h2v2H9zM5 5h2v2H5zM9 5h2v2H9zM1 9h2v2H1zM5 9h2v2H5zM9 9h2v2H9z" fill="#888"/></svg></div>
    </div>
  </div>
</div>
<script src="https://cdn.jsdelivr.net/npm/bootstrap@5.3.0/dist/js/bootstrap.bundle.min.js"></script>
</body>
</html>
